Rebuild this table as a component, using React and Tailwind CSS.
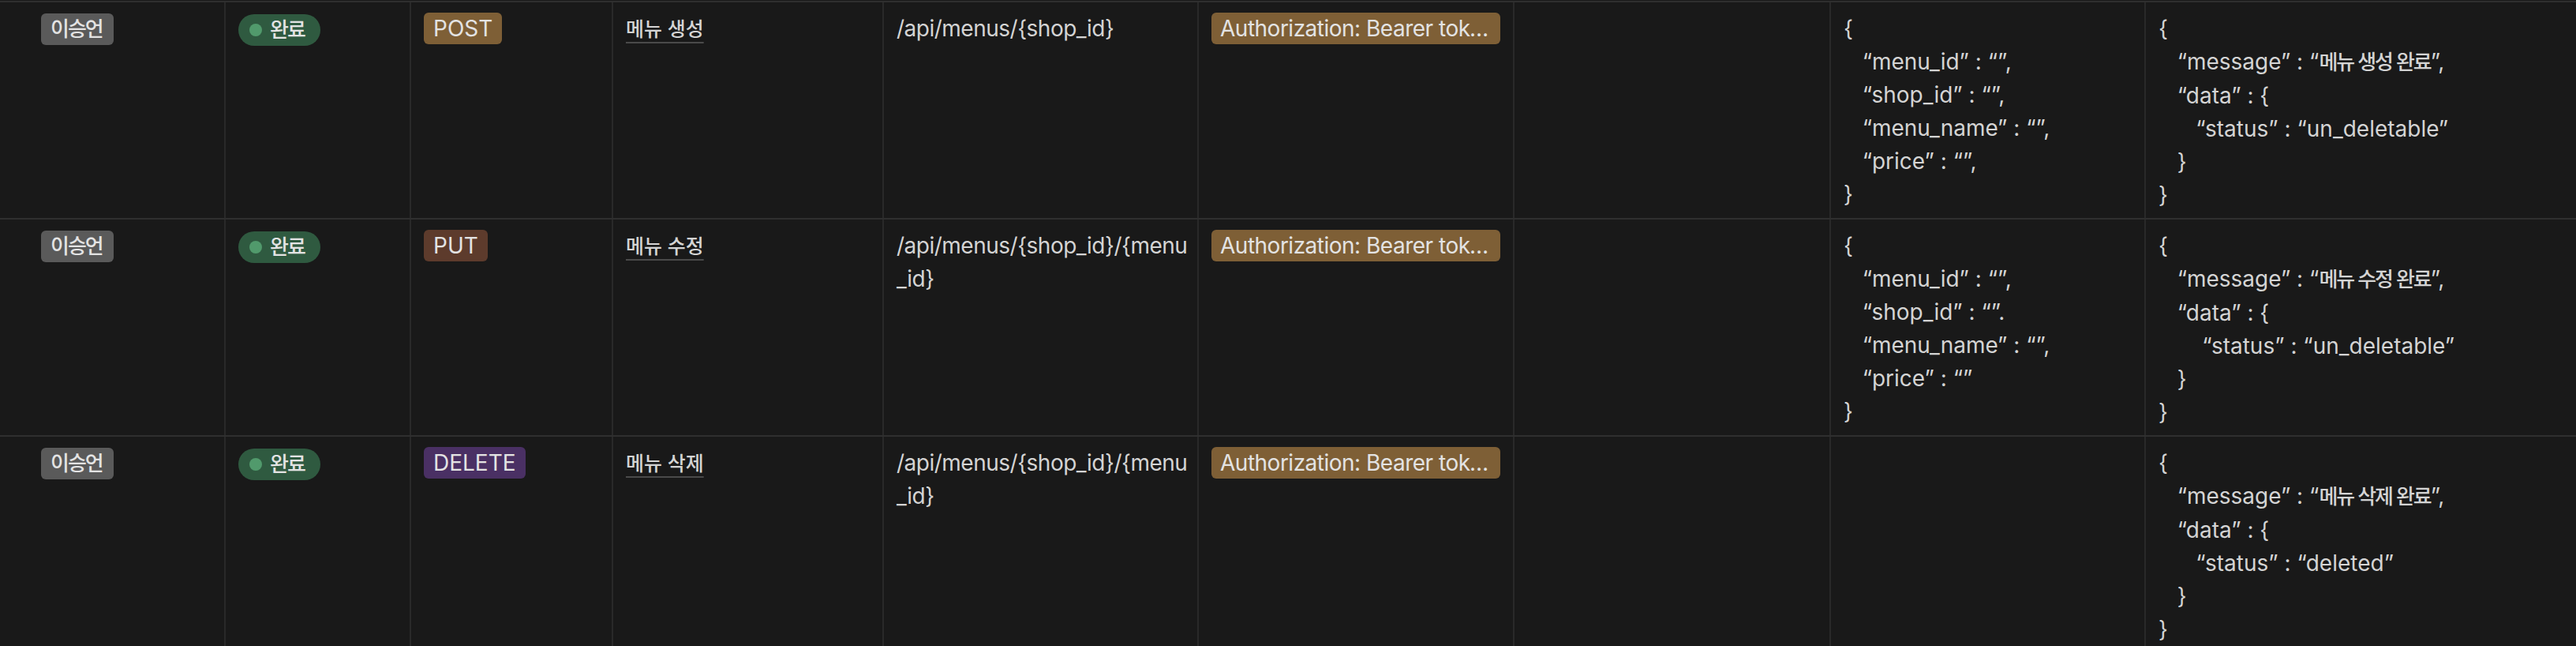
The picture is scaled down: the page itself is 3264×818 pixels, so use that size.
import React from 'react'

const ko = "text-[26px] tracking-[-2px] font-medium"

const rows = [
    {
        name: "이승언",
        method: "POST",
        methodColor: "bg-[#7e5f36]",
        title: "메뉴 생성",
        url: "/api/menus/{shop_id}",
        request: [
            "{",
            "   “menu_id” : “”,",
            "   “shop_id” : “”,",
            "   “menu_name” : “”,",
            "   “price” : “”,",
            "}",
        ],
        message: "메뉴 생성 완료",
        statusIndent: "      ",
        status: "un_deletable",
    },
    {
        name: "이승언",
        method: "PUT",
        methodColor: "bg-[#5d3b2c]",
        title: "메뉴 수정",
        url: "/api/menus/{shop_id}/{menu_id}",
        request: [
            "{",
            "   “menu_id” : “”,",
            "   “shop_id” : “”.",
            "   “menu_name” : “”,",
            "   “price” : “”",
            "}",
        ],
        message: "메뉴 수정 완료",
        statusIndent: "       ",
        status: "un_deletable",
    },
    {
        name: "이승언",
        method: "DELETE",
        methodColor: "bg-[#4a3064]",
        title: "메뉴 삭제",
        url: "/api/menus/{shop_id}/{menu_id}",
        request: null,
        message: "메뉴 삭제 완료",
        statusIndent: "      ",
        status: "deleted",
    },
]

const Tag = ({ className, children }) => (
    <span className={`inline-flex items-center h-[40px] mt-[1px] px-[12px] rounded-[6px] text-[#e3e3e3] whitespace-nowrap ${className}`}>
        {children}
    </span>
)

const Cell = ({ className = "", children }) => (
    <div className={`shrink-0 border-r-2 border-[#292929] pt-[12px] pb-[8px] px-[16px] ${className}`}>
        {children}
    </div>
)

const App = () => {
    return (
        <div className='w-[3264px] h-[818px] overflow-hidden bg-[#191919] text-[#d4d4d4] text-[28px] leading-[42px] font-["Inter","Noto_Sans_CJK_KR",sans-serif]'>
            <div className='mt-[1px] border-t-2 border-[#2f2f2f]'>
                {rows.map((item, index) => (
                    <div key={index} className='flex border-b-2 border-[#2f2f2f]'>
                        <Cell className="w-[286px] !pl-[52px]">
                            <Tag className="bg-[#5a5a5a] !pr-[14px]"><span className={ko}>{item.name}</span></Tag>
                        </Cell>
                        <Cell className="w-[235px]">
                            <span className='inline-flex items-center h-[40px] mt-[1px] pl-[14px] pr-[20px] gap-[10px] rounded-full bg-[#2f5a40] text-[#e3e3e3]'>
                                <span className='w-[16px] h-[16px] rounded-full bg-[#519a6c]'></span>
                                <span className={ko}>완료</span>
                            </span>
                        </Cell>
                        <Cell className="w-[256px]">
                            <Tag className={item.methodColor}>{item.method}</Tag>
                        </Cell>
                        <Cell className="w-[343px]">
                            <span className='text-[25px] font-medium underline decoration-2 decoration-[#4a4a4a] underline-offset-[7px]'>{item.title}</span>
                        </Cell>
                        <Cell className="w-[399px] break-all tracking-[-0.5px] !pr-[8px]">
                            {item.url}
                        </Cell>
                        <Cell className="w-[400px]">
                            <Tag className="bg-[#7e5f36] w-full !px-[11px] tracking-[-0.5px]">
                                <span className='truncate'>Authorization: Bearer token</span>
                            </Tag>
                        </Cell>
                        <Cell className="w-[401px]"></Cell>
                        <Cell className="w-[399px] whitespace-pre-wrap">
                            {item.request?.map((line, i) => (
                                <div key={i}>{line}</div>
                            ))}
                        </Cell>
                        <div className='flex-1 pt-[12px] pb-[8px] px-[16px] whitespace-pre-wrap'>
                            <div>{"{"}</div>
                            <div>{"   “message” : “"}<span className={ko}>{item.message}</span>{"”,"}</div>
                            <div>{"   “data” : {"}</div>
                            <div>{item.statusIndent}{`“status” : “${item.status}”`}</div>
                            <div>{"   }"}</div>
                            <div>{"}"}</div>
                        </div>
                    </div>
                ))}
            </div>
        </div>
    )
}

export default App
